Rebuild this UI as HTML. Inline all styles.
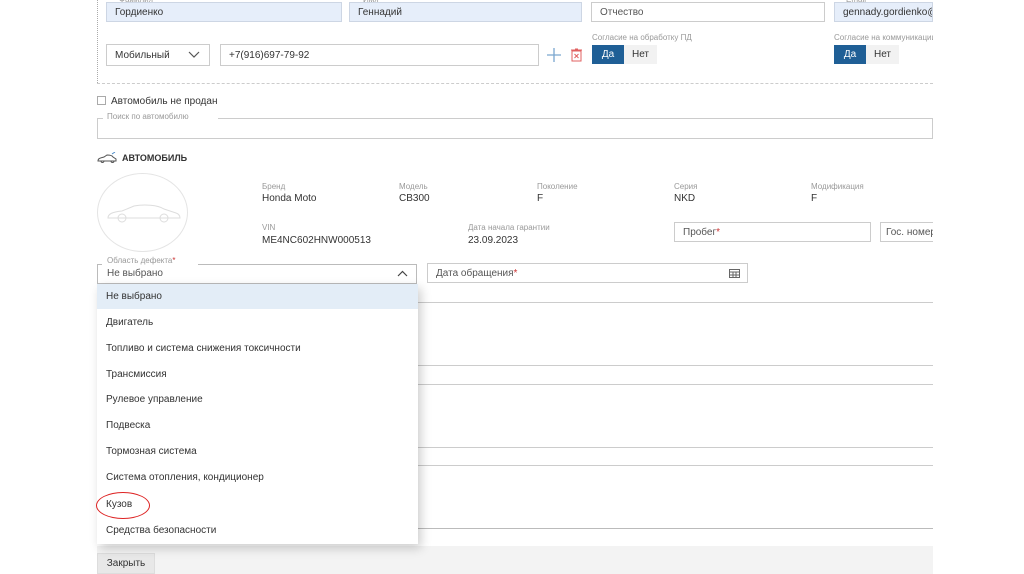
<!DOCTYPE html>
<html><head><meta charset="utf-8"><style>
*{box-sizing:border-box;margin:0;padding:0}
body{width:1024px;height:574px;overflow:hidden;background:#fff;font-family:"Liberation Sans",sans-serif;color:#333;position:relative}
.a{position:absolute}
.inp{position:absolute;border:1px solid #ccc;height:20px;font-size:10px;line-height:20px;padding-left:8px;color:#333}
.blue{background:#e6eefa;border-color:#cdd6e4}
.lbl{position:absolute;font-size:8px;color:#999}
.val{position:absolute;font-size:10px;color:#333}
.item{position:absolute;left:106px;font-size:10px;color:#333}
.line{position:absolute;left:418px;width:515px;height:1px;background:#ccc}
</style></head><body>
<div class="a" style="left:97px;top:0;height:83px;border-left:1px dotted #aaa"></div>
<div class="a" style="left:97px;top:83px;width:836px;border-top:1px dashed #ccc"></div>

<div class="lbl" style="left:116px;top:-5px;background:#fff;padding:0 3px">Фамилия</div>
<div class="lbl" style="left:360px;top:-5px;background:#fff;padding:0 3px">Имя</div>
<div class="lbl" style="left:843px;top:-5px;background:#fff;padding:0 3px">Email</div>
<div class="inp blue" style="left:106px;top:2px;width:236px">Гордиенко</div>
<div class="inp blue" style="left:349px;top:2px;width:233px">Геннадий</div>
<div class="inp" style="left:591px;top:2px;width:234px;color:#555">Отчество</div>
<div class="inp blue" style="left:834px;top:2px;width:99px;overflow:hidden;white-space:nowrap">gennady.gordienko@</div>

<div class="inp" style="left:106px;top:44px;width:104px;height:22px;line-height:22px">Мобильный</div>
<svg class="a" style="left:188px;top:51px" width="12" height="8"><path d="M1 1l5 5 5-5" fill="none" stroke="#555" stroke-width="1.2"/></svg>
<div class="inp" style="left:220px;top:44px;width:319px;height:22px;line-height:22px">+7(916)697-79-92</div>
<svg class="a" style="left:547px;top:48px" width="14" height="14"><path d="M7 0v14M0 7h14" stroke="#7aa6cf" stroke-width="1.3"/></svg>
<svg class="a" style="left:571px;top:48px" width="11" height="14"><rect x="1" y="3" width="9" height="10" fill="none" stroke="#e06060"/><path d="M0 2h11M4 1h3M3.5 6l4 4M7.5 6l-4 4" stroke="#e06060"/></svg>
<div class="lbl" style="left:592px;top:33px">Согласие на обработку ПД</div>
<div class="a" style="left:592px;top:45px;width:32px;height:19px;background:#1f5f96;color:#fff;font-size:10px;line-height:19px;text-align:center">Да</div>
<div class="a" style="left:624px;top:45px;width:33px;height:19px;background:#f2f2f2;font-size:10px;line-height:19px;text-align:center">Нет</div>
<div class="lbl" style="left:834px;top:33px;width:99px;overflow:hidden;white-space:nowrap">Согласие на коммуникации</div>
<div class="a" style="left:834px;top:45px;width:32px;height:19px;background:#1f5f96;color:#fff;font-size:10px;line-height:19px;text-align:center">Да</div>
<div class="a" style="left:866px;top:45px;width:33px;height:19px;background:#f2f2f2;font-size:10px;line-height:19px;text-align:center">Нет</div>

<div class="a" style="left:97px;top:96px;width:9px;height:9px;border:1px solid #aaa"></div>
<div class="a" style="left:111px;top:96px;font-size:10px">Автомобиль не продан</div>
<div class="a" style="left:97px;top:118px;width:836px;height:21px;border:1px solid #ccc;border-top:none"></div>
<div class="a" style="left:97px;top:118px;width:6px;border-top:1px solid #ccc"></div>
<div class="a" style="left:218px;top:118px;width:715px;border-top:1px solid #ccc"></div>
<div class="lbl" style="left:107px;top:112px">Поиск по автомобилю</div>

<svg class="a" style="left:97px;top:152px" width="20" height="12"><path d="M1 9c0-3 3-3 6-4l3-2c2 0 5 0 6 2l3 2v2H1z M4 9a1.5 1.5 0 1 0 3 0M14 9a1.5 1.5 0 1 0 3 0" fill="none" stroke="#555" stroke-width="1"/><path d="M15 2l3-2" stroke="#4a8ac7"/></svg>
<div class="a" style="left:122px;top:153px;font-size:9px;font-weight:bold;color:#333">АВТОМОБИЛЬ</div>

<div class="a" style="left:97px;top:173px;width:91px;height:79px;border:1px solid #e4e4e4;border-radius:50%"></div>
<svg class="a" style="left:106px;top:200px" width="76" height="24"><path d="M2 18c0-4 4-6 14-7l12-5c10-2 24-1 30 3l12 4c3 1 4 3 4 5H2z" fill="none" stroke="#ddd"/><circle cx="16" cy="18" r="4" fill="none" stroke="#ddd"/><circle cx="58" cy="18" r="4" fill="none" stroke="#ddd"/></svg>

<div class="lbl" style="left:262px;top:182px">Бренд</div><div class="val" style="left:262px;top:193px">Honda Moto</div>
<div class="lbl" style="left:399px;top:182px">Модель</div><div class="val" style="left:399px;top:193px">CB300</div>
<div class="lbl" style="left:537px;top:182px">Поколение</div><div class="val" style="left:537px;top:193px">F</div>
<div class="lbl" style="left:674px;top:182px">Серия</div><div class="val" style="left:674px;top:193px">NKD</div>
<div class="lbl" style="left:811px;top:182px">Модификация</div><div class="val" style="left:811px;top:193px">F</div>
<div class="lbl" style="left:262px;top:223px">VIN</div><div class="val" style="left:262px;top:235px">ME4NC602HNW000513</div>
<div class="lbl" style="left:468px;top:223px">Дата начала гарантии</div><div class="val" style="left:468px;top:235px">23.09.2023</div>
<div class="inp" style="left:674px;top:222px;width:197px;color:#555">Пробег<span style="color:#c33">*</span></div>
<div class="inp" style="left:880px;top:222px;width:53px;border-right:none;overflow:hidden;white-space:nowrap;padding-left:5px;color:#555">Гос. номер</div>

<div class="a" style="left:97px;top:264px;width:320px;height:20px;border:1px solid #bbb;border-top:none"></div>
<div class="a" style="left:97px;top:264px;width:5px;border-top:1px solid #bbb"></div>
<div class="a" style="left:198px;top:264px;width:219px;border-top:1px solid #bbb"></div>
<div class="lbl" style="left:107px;top:256px">Область дефекта<span style="color:#c33">*</span></div>
<div class="a" style="left:107px;top:268px;font-size:10px;color:#555">Не выбрано</div>
<svg class="a" style="left:397px;top:270px" width="11" height="7"><path d="M1 6l4.5-4.5L10 6" fill="none" stroke="#444" stroke-width="1.2"/></svg>
<div class="inp" style="left:427px;top:263px;width:321px;color:#555">Дата обращения<span style="color:#c33">*</span></div>
<svg class="a" style="left:729px;top:268px" width="11" height="10"><rect x="0.5" y="1.5" width="10" height="8" fill="none" stroke="#666"/><path d="M0 4h11M4 4v6M7 4v6M0 7h11" stroke="#666"/></svg>

<div class="line" style="top:302px"></div>
<div class="line" style="top:365px"></div>
<div class="line" style="top:384px"></div>
<div class="line" style="top:447px"></div>
<div class="line" style="top:465px"></div>
<div class="line" style="top:528px;background:#bbb"></div>
<div class="a" style="left:97px;top:546px;width:836px;height:28px;background:#f3f3f3"></div>
<div class="a" style="left:97px;top:553px;width:58px;height:21px;background:#e8e8e8;border:1px solid #ddd;font-size:10px;line-height:20px;text-align:center">Закрыть</div>

<div class="a" style="left:97px;top:284px;width:321px;height:260px;background:#fff;box-shadow:3px 4px 10px rgba(0,0,0,.2)"></div>
<div class="a" style="left:97px;top:284px;width:321px;height:25px;background:#e3edf7"></div>
<div class="item" style="top:291px">Не выбрано</div>
<div class="item" style="top:317px">Двигатель</div>
<div class="item" style="top:343px">Топливо и система снижения токсичности</div>
<div class="item" style="top:369px">Трансмиссия</div>
<div class="item" style="top:394px">Рулевое управление</div>
<div class="item" style="top:420px">Подвеска</div>
<div class="item" style="top:446px">Тормозная система</div>
<div class="item" style="top:472px">Система отопления, кондиционер</div>
<div class="item" style="top:499px">Кузов</div>
<div class="item" style="top:525px">Средства безопасности</div>
<div class="a" style="left:96px;top:492px;width:54px;height:27px;border:1.5px solid #d22;border-radius:50%"></div>
</body></html>
